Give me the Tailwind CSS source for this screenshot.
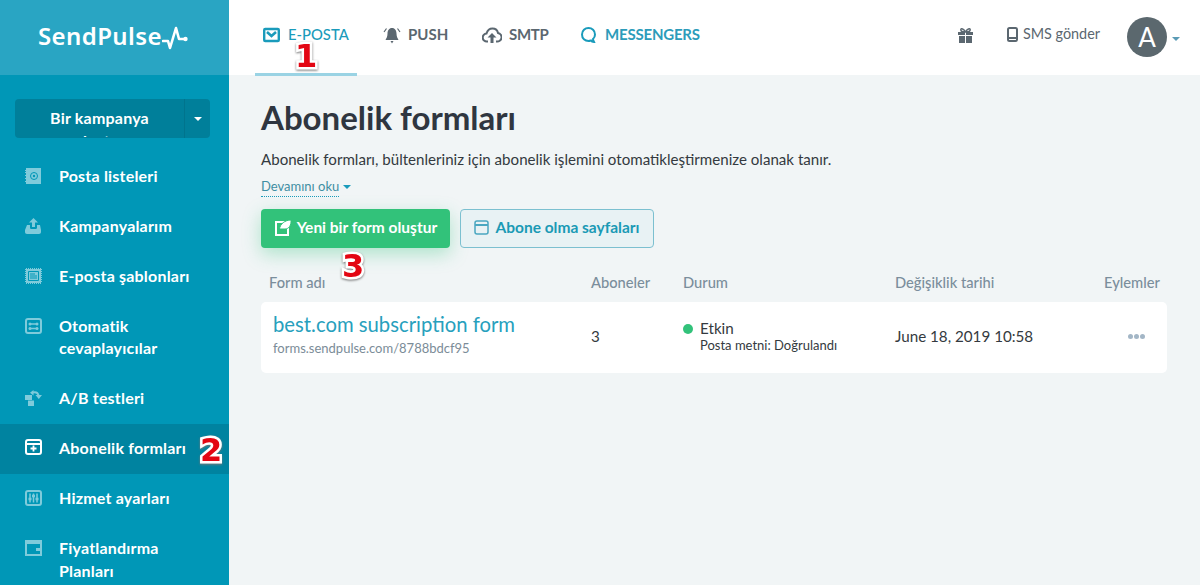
<!DOCTYPE html>
<html lang="tr">
<head>
  <meta charset="UTF-8" />
  <title>Abonelik formları – SendPulse</title>
  <script src="https://cdn.jsdelivr.net/npm/@tailwindcss/browser@4"></script>
</head>
<body class="relative flex h-[585px] overflow-hidden bg-[#f1f5f6] font-['Lato','Open_Sans',sans-serif] text-[#343a40]">

  <!-- sidebar -->
  <aside class="w-[229px] shrink-0 bg-[#0097b7] text-white">
    <div class="flex h-[75px] items-center bg-[#29a5c3] pb-1 pl-[38px]">
      <span class="font-['Noto_Sans',sans-serif] text-[24px] font-semibold tracking-[0.4px]">SendPulse</span>
      <svg class="ml-0 mt-1" width="26" height="24" viewBox="0 0 26 24" fill="none" stroke="white" stroke-width="2.600" stroke-linejoin="round" stroke-linecap="round"><path d="M1 15h5l2 7 6-20 3 11h6"/><circle cx="23.500" cy="13" r="2.200" fill="white" stroke="none"/></svg>
    </div>

    <div class="ml-[15px] mr-[19px] mt-6 flex h-[39px] overflow-hidden rounded bg-[#007f9a]">
      <div class="h-[38px] w-[169px] overflow-hidden px-5 pt-[6.500px] text-center text-[16px] font-bold leading-[23px] tracking-[0.2px]">Bir kampanya oluştur</div>
      <div class="flex flex-1 items-center justify-center border-l border-[#00748d]">
        <span class="h-0 w-0 border-x-4 border-t-4 border-x-transparent border-t-white"></span>
      </div>
    </div>

    <nav class="mt-[13px] text-[16px] font-bold leading-[22.500px] tracking-[0.2px]">
      <a class="flex gap-[18px] py-[13.750px] pl-[25px]">
        <svg class="mt-[3px] shrink-0" width="16" height="16" viewBox="0 0 16 16"><path fill="#7fcbdb" d="M1 0h15v16H1v-2H0v-1h1v-2H0v-1h1V8H0V7h1V5H0V4h1V3H0V2h1z"/><circle cx="9" cy="8" r="3.500" fill="none" stroke="#0097b7"/><circle cx="9" cy="8" r="1.200" fill="#0097b7"/></svg>
        <span>Posta listeleri</span>
      </a>
      <a class="flex gap-[17px] py-[13.750px] pl-[25px]">
        <svg class="mt-[3px] shrink-0" width="17" height="16" viewBox="0 0 17 16"><path fill="#7fcbdb" d="M8.500 0 13 4.500h-3V9H7V4.500H4zM2 7h3v2.500c0 1 .8 1.500 1.500 1.500h4c.7 0 1.500-.5 1.500-1.500V7h3l1 5v2c0 1-.8 2-2 2H2c-1.200 0-2-1-2-2v-2z"/></svg>
        <span>Kampanyalarım</span>
      </a>
      <a class="flex gap-[17px] py-[13.750px] pl-[25px]">
        <svg class="mt-[3px] shrink-0" width="17" height="16" viewBox="0 0 17 16"><path fill="#7fcbdb" d="M0 0h17v16H0z"/><path stroke="#0097b7" fill="none" stroke-dasharray="1 1" d="M0 .5h17M0 15.500h17M.5 0v16M16.500 0v16"/><path stroke="#0097b7" fill="none" d="M3.500 3.500h10v9h-10zM5 6h5M5 8h7M5 10h7"/></svg>
        <span>E-posta şablonları</span>
      </a>
      <a class="flex gap-[17px] py-[13.750px] pl-[25px]">
        <svg class="mt-[3px] shrink-0" width="17" height="16" viewBox="0 0 17 16" fill="none" stroke="#7fcbdb"><rect x="1" y="1" width="15" height="14" rx="2" stroke-width="2"/><path stroke-width="1.500" d="M4 6h9M4 10.500h9"/><circle cx="5" cy="6" r="1.500" fill="#7fcbdb" stroke="none"/><circle cx="12" cy="6" r="1.500" fill="#7fcbdb" stroke="none"/><circle cx="5" cy="10.500" r="1.500" fill="#7fcbdb" stroke="none"/><circle cx="12" cy="10.500" r="1.500" fill="#7fcbdb" stroke="none"/></svg>
        <span class="w-[130px]">Otomatik cevaplayıcılar</span>
      </a>
      <a class="flex gap-[17px] py-[13.750px] pl-[25px]">
        <svg class="mt-[3px] shrink-0" width="17" height="16" viewBox="0 0 17 16"><path fill="#7fcbdb" d="M0 5h7v5H0zM3 10.500h6V16H3z"/><path fill="none" stroke="#7fcbdb" stroke-width="2" d="M8 2.500c2.500-.8 4.500 0 5.500 2.500"/><path fill="#7fcbdb" d="M10.500 5H17l-3.200 4zM8.500 0v5.500L5 2.700z"/></svg>
        <span>A/B testleri</span>
      </a>
      <a class="flex gap-[17px] bg-[#0083a0] py-[13.750px] pl-[25px]">
        <svg class="mt-[2px] shrink-0" width="17" height="16" viewBox="0 0 17 16" fill="none"><rect x="1" y="1" width="15" height="14" rx="2" stroke="white" stroke-width="2"/><path stroke="white" stroke-width="2" d="M1 5h15"/><path stroke="white" stroke-width="1.800" d="M8.500 6.500v6M5.500 9.500h6"/></svg>
        <span>Abonelik formları</span>
      </a>
      <a class="flex gap-[17px] py-[13.750px] pl-[25px]">
        <svg class="mt-[3px] shrink-0" width="17" height="16" viewBox="0 0 17 16" fill="none" stroke="#7fcbdb"><rect x="1" y="1" width="15" height="14" rx="2" stroke-width="2"/><path stroke-width="1.500" d="M5 3.500v9M8.500 3.500v9M12 3.500v9"/><path stroke-width="2.500" d="M3.500 9h3M7 6h3M10.500 9h3"/></svg>
        <span>Hizmet ayarları</span>
      </a>
      <a class="flex gap-[17px] py-[13.750px] pl-[25px]">
        <svg class="mt-[3px] shrink-0" width="17" height="16" viewBox="0 0 17 16" fill="none"><rect x="1" y="1" width="15" height="14" stroke="#7fcbdb" stroke-width="2"/><path fill="#7fcbdb" d="M0 0h17v4H0zM11 8h6v3h-6z"/></svg>
        <span class="w-[130px]">Fiyatlandırma Planları</span>
      </a>
    </nav>
  </aside>

  <div class="min-w-0 flex-1">
    <!-- top bar -->
    <header class="flex h-[75px] items-start bg-white pl-[26px] pr-[20px] text-[15px] font-bold">
      <a class="flex h-[76px] w-[102px] gap-[8px] border-b-[3px] border-[#9ad3e4] pl-2 pt-[26px] text-[#1a9bbb]">
        <svg class="mt-[1px]" width="17" height="16" viewBox="0 0 17 16" fill="none" stroke="#1a9bbb" stroke-width="2.400"><rect x="1.200" y="2" width="14.600" height="12" rx="1"/><path stroke-width="2.600" d="M4 5l4.500 4L13 5"/></svg>
        <span class="-mt-px text-[14.800px] font-medium leading-[18px]">E-POSTA</span>
      </a>
      <a class="ml-[26px] flex w-[99px] gap-[7px] pt-[26px] text-[#5b6770]">
        <svg class="mt-[1px]" width="18" height="17" viewBox="0 0 18 17" fill="#5b6770"><path d="M9 1c3 0 4.500 2.500 4.500 5.500 0 3 1 4.500 2 6.500h-13c1-2 2-3.500 2-6.500C4.500 3.500 6 1 9 1zM7.500 14h3L9 16.500z"/><path fill="none" stroke="#5b6770" stroke-width="1.200" d="M3.500 1.500 1 5M14.500 1.500 17 5"/></svg>
        <span class="-mt-px leading-[18px]">PUSH</span>
      </a>
      <a class="flex w-[99px] gap-[7px] pt-[26px] text-[#5b6770]">
        <svg class="mt-[1px]" width="20" height="17" viewBox="0 0 20 17" fill="none" stroke="#5b6770" stroke-width="2"><path d="M6 14.500H5a4 4 0 0 1-.5-8C5.500 3 8 1.500 10.500 1.500c3 0 5 2 5.500 4.500a4.300 4.300 0 0 1-1.500 8.500H14"/><path fill="#5b6770" stroke="none" d="M10 6l4.500 4.500h-3V16h-3v-5.500h-3z"/></svg>
        <span class="-mt-px leading-[18px] tracking-[-0.3px]">SMTP</span>
      </a>
      <a class="flex gap-[9px] pt-[26px] text-[#2c9cba]">
        <svg class="mt-[1px]" width="15" height="17" viewBox="0 0 15 17" fill="none" stroke="#1a9bbb" stroke-width="2"><path d="M10 13.500c-1 .3-1.800.5-2.500.5C4 14 1 11.500 1 7.500S4 1 7.500 1 14 3.500 14 7.500c0 2-.8 3.500-2 4.500 0 1 .5 2 1 3-1.500 0-2.500-.5-3-1.500z"/></svg>
        <span class="-mt-px leading-[18px] tracking-[-0.2px]">MESSENGERS</span>
      </a>

      <div class="ml-auto flex items-center pt-[17px] font-normal text-[#5b6770]">
        <svg class="-mt-1" width="17" height="17" viewBox="0 0 17 17" fill="#5b6770"><path d="M1 5h7v3H1zM9 5h7v3H9zM2 9h6v7H2zM9 9h6v7H9z"/><path fill="none" stroke="#5b6770" stroke-width="1.500" d="M8.500 5C6 1 3 1 4 3.500 4.500 5 6 5 8.500 5zM8.500 5C11 1 14 1 13 3.500 12.500 5 11 5 8.500 5z"/></svg>
        <svg class="-mt-[6px] ml-[33px]" width="11" height="15" viewBox="0 0 11 15" fill="none" stroke="#5b6770" stroke-width="2"><rect x="1" y="1" width="9" height="13" rx="1.500"/><path d="M1 11h9"/></svg>
        <span class="-mt-[6px] ml-[5px] text-[14.400px]">SMS gönder</span>
        <span class="ml-[27px] flex h-10 w-10 items-center justify-center rounded-full bg-[#5b686e] text-[26px] text-white">A</span>
        <span class="ml-[5px] mt-1 h-0 w-0 border-x-4 border-t-4 border-x-transparent border-t-[#5b9bb5]"></span>
      </div>
    </header>

    <!-- page -->
    <main class="px-8 pt-[22px] pr-[33px]">
      <h1 class="text-[33px] font-bold leading-[40px] text-[#2f3640]">Abonelik formları</h1>
      <p class="mt-[12px] text-[15.100px] leading-5">Abonelik formları, bültenleriniz için abonelik işlemini otomatikleştirmenize olanak tanır.</p>
      <div class="mt-[9px] flex items-center gap-1">
        <a class="border-b border-dotted border-[#1a9bbb] pb-[1px] text-[13px] leading-[17px] text-[#3f8ea3]">Devamını oku</a>
        <span class="mb-[1px] h-0 w-0 border-x-4 border-t-4 border-x-transparent border-t-[#1a9bbb]"></span>
      </div>

      <div class="mt-[12px] flex gap-[10px] text-[15.500px] font-bold">
        <button class="flex h-[39px] w-[189px] items-center justify-center gap-[6px] rounded bg-[#32c27a] pb-[2px] text-white shadow-[0_6px_18px_rgba(50,194,122,0.35)]">
          <svg width="17" height="16" viewBox="0 0 17 16" fill="none"><path stroke="white" stroke-width="2" d="M11 2H2v13h12V7"/><path fill="white" stroke="#32c27a" d="M17 0c.5 5-2 9-6 9H5.500C6 4 11 0 17 0z"/></svg>
          Yeni bir form oluştur
        </button>
        <button class="flex h-[39px] w-[194px] items-center justify-center gap-[6px] rounded border border-[#7cc0d0] bg-[#e8f2f4] pb-[2px] text-[#1a9ab5]">
          <svg width="15" height="15" viewBox="0 0 15 15" fill="none" stroke="#4aa7c0" stroke-width="1.500"><rect x="1" y="1" width="13" height="13" rx="2"/><path stroke-width="2" d="M1 5h13"/></svg>
          Abone olma sayfaları
        </button>
      </div>

      <div class="mt-[25px] grid grid-cols-[322px_92px_212px_209px_1fr] pl-2 text-[14.700px] font-medium leading-[18px] text-[#7b8e9c]">
        <span>Form adı</span><span>Aboneler</span><span>Durum</span><span>Değişiklik tarihi</span><span class="whitespace-nowrap">Eylemler</span>
      </div>

      <div class="mt-[11px] grid h-[71px] grid-cols-[318px_92px_212px_209px_1fr] items-center rounded-[5px] bg-white pl-3 text-[15.200px]">
        <div class="mb-[6px]">
          <a class="block text-[20.300px] leading-6 text-[#27a0bd]">best.com subscription form</a>
          <span class="mt-[3px] block text-[13px] leading-[18px] text-[#7b8c98]">forms.sendpulse.com/8788bdcf95</span>
        </div>
        <span class="-mt-[2px]">3</span>
        <div class="mb-1 flex">
          <span class="mt-[5px] h-[10px] w-[10px] rounded-full bg-[#32c27a]"></span>
          <div class="ml-[7px]">
            <div class="leading-[18px]">Etkin</div>
            <div class="text-[13px] leading-[16px]">Posta metni: Doğrulandı</div>
          </div>
        </div>
        <span class="-mt-[2px]">June 18, 2019 10:58</span>
        <span class="-mt-[2px] ml-6 flex gap-[1px]">
          <i class="h-[5px] w-[5px] rounded-full bg-[#a3b6c6]"></i><i class="h-[5px] w-[5px] rounded-full bg-[#a3b6c6]"></i><i class="h-[5px] w-[5px] rounded-full bg-[#a3b6c6]"></i>
        </span>
      </div>
    </main>
  </div>

  <!-- tutorial markers -->
  <span class="absolute left-[295px] top-[37px] font-['DejaVu_Sans',sans-serif] text-[32px] font-bold leading-[38px] text-[#e30613] drop-shadow-[0_1px_1px_#777] [-webkit-text-stroke:5px_white] [paint-order:stroke_fill]">1</span>
  <span class="absolute left-[200px] top-[431px] font-['DejaVu_Sans',sans-serif] text-[32px] font-bold leading-[38px] text-[#e30613] drop-shadow-[0_1px_1px_#777] [-webkit-text-stroke:5px_white] [paint-order:stroke_fill]">2</span>
  <span class="absolute left-[342px] top-[247px] font-['DejaVu_Sans',sans-serif] text-[32px] font-bold leading-[38px] text-[#e30613] drop-shadow-[0_1px_1px_#777] [-webkit-text-stroke:5px_white] [paint-order:stroke_fill]">3</span>
</body>
</html>
